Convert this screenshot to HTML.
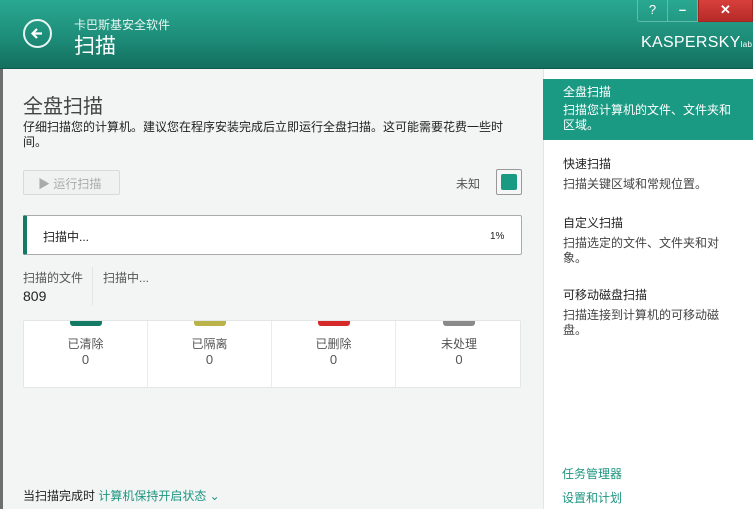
<!DOCTYPE html>
<html><head><meta charset="utf-8"><style>
*{margin:0;padding:0;box-sizing:border-box}
body{width:753px;height:509px;overflow:hidden;font-family:"Liberation Sans","Noto Sans CJK SC",sans-serif;background:#f2f5f4;position:relative;font-size:12px;color:#222}
.hdr{position:absolute;left:0;top:0;width:753px;height:69px;background:linear-gradient(180deg,#2aa891 0%,#1d8d79 55%,#146f5f 100%);border-bottom:1px solid #0e5b4e}
.back{position:absolute;left:23px;top:19px;width:29px;height:29px;border:2px solid #e8f5f2;border-radius:50%;color:#fff}
.t1{position:absolute;left:74px;top:16px;color:#e8f5f2;font-size:12px}
.t2{position:absolute;left:74px;top:30px;color:#fff;font-size:21px}
.logo{position:absolute;left:641px;top:34px;color:#fff;font-size:16px;letter-spacing:0.3px}
.btn{position:absolute;top:0;height:22px;border:1px solid #5fbdac;border-top:none;color:#fff;text-align:center;font-size:13px;line-height:20px}
.left{position:absolute;left:0;top:69px;width:3px;height:440px;background:#6b6f70}
.right{position:absolute;left:543px;top:69px;width:210px;height:440px;background:#fff;border-left:1px solid #e0e6e4}
.act{position:absolute;left:543px;top:79px;width:210px;height:61px;background:#1b9a83;color:#fff;padding:6px 0 0 20px;line-height:15px}
.it{position:absolute;left:563px;line-height:15px;font-size:12px}
.it .d{color:#444}
.lk{position:absolute;left:562px;color:#1d9580;font-size:12px}
.card{position:absolute;left:23px;top:320px;width:498px;height:68px;background:#fff;border:1px solid #e2e7e5;border-radius:2px}
.col{position:absolute;top:0;width:124px;height:66px;text-align:center;border-right:1px solid #e8ecea;color:#555}
.bar{width:32px;height:5px;margin:0 auto;border-radius:0 0 3px 3px}
</style></head><body>
<div class="hdr">
<div class="back"><svg width="25" height="25" viewBox="0 0 25 25"><path d="M17 12.5H8M12 8l-4.5 4.5L12 17" stroke="#fff" stroke-width="2.2" fill="none"/></svg></div>
<div class="t1">卡巴斯基安全软件</div>
<div class="t2">扫描</div>
<div class="btn" style="left:637px;width:31px;border-left:1px solid #5fbdac;border-radius:0 0 0 3px">?</div>
<div class="btn" style="left:667px;width:31px;font-weight:bold">–</div>
<div class="btn" style="left:698px;width:55px;background:linear-gradient(#d8403c,#b52a27);border-color:#a02624;font-weight:bold">✕</div>
<div class="logo">KASPERSKY<span style="font-size:8px">lab</span></div>
</div>
<div class="left"></div>
<div style="position:absolute;left:23px;top:90px;font-size:20px;color:#444">全盘扫描</div>
<div style="position:absolute;left:23px;top:120px;width:485px;line-height:15px;font-size:12px">仔细扫描您的计算机。建议您在程序安装完成后立即运行全盘扫描。这可能需要花费一些时间。</div>
<div style="position:absolute;left:23px;top:170px;width:97px;height:25px;border:1px solid #d6dbd9;border-radius:2px;background:#f0f2f1;color:#aaa;padding:4px 0 0 14px;font-size:12px">▶ 运行扫描</div>
<div style="position:absolute;left:456px;top:175px;color:#555">未知</div>
<div style="position:absolute;left:496px;top:169px;width:26px;height:26px;border:1px solid #999;border-radius:2px;background:#f6f6f6"><div style="margin:4px;width:16px;height:16px;background:#1a9a82;border-radius:2px"></div></div>
<div style="position:absolute;left:23px;top:215px;width:499px;height:40px;background:#fff;border:1px solid #aaa;border-left:4px solid #137a66;border-radius:2px"></div>
<div style="position:absolute;left:43px;top:228px">扫描中...</div>
<div style="position:absolute;left:490px;top:231px;font-size:10px">1%</div>
<div style="position:absolute;left:23px;top:269px;color:#555">扫描的文件</div>
<div style="position:absolute;left:23px;top:288px;font-size:14px">809</div>
<div style="position:absolute;left:92px;top:267px;width:1px;height:38px;background:#e2e6e4"></div>
<div style="position:absolute;left:103px;top:269px;color:#555">扫描中...</div>
<div class="card">
<div class="col" style="left:0"><div class="bar" style="background:#137a66"></div><div style="margin-top:9px">已清除</div><div style="font-size:13px">0</div></div>
<div class="col" style="left:124px"><div class="bar" style="background:#b9b34a"></div><div style="margin-top:9px">已隔离</div><div style="font-size:13px">0</div></div>
<div class="col" style="left:248px"><div class="bar" style="background:#d62a2a"></div><div style="margin-top:9px">已删除</div><div style="font-size:13px">0</div></div>
<div class="col" style="left:373px;border:none"><div class="bar" style="background:#8a8a8a"></div><div style="margin-top:9px">未处理</div><div style="font-size:13px">0</div></div>
</div>
<div style="position:absolute;left:23px;top:487px">当扫描完成时 <span style="color:#1d9580">计算机保持开启状态 ⌄</span></div>
<div class="right"></div>
<div class="act">全盘扫描<br><span style="display:block;margin-top:3px">扫描您计算机的文件、文件夹和<br>区域。</span></div>
<div class="it" style="top:157px">快速扫描<div class="d" style="margin-top:5px">扫描关键区域和常规位置。</div></div>
<div class="it" style="top:216px">自定义扫描<div class="d" style="margin-top:5px">扫描选定的文件、文件夹和对<br>象。</div></div>
<div class="it" style="top:288px">可移动磁盘扫描<div class="d" style="margin-top:5px">扫描连接到计算机的可移动磁<br>盘。</div></div>
<div class="lk" style="top:465px">任务管理器</div>
<div class="lk" style="top:489px">设置和计划</div>
</body></html>
